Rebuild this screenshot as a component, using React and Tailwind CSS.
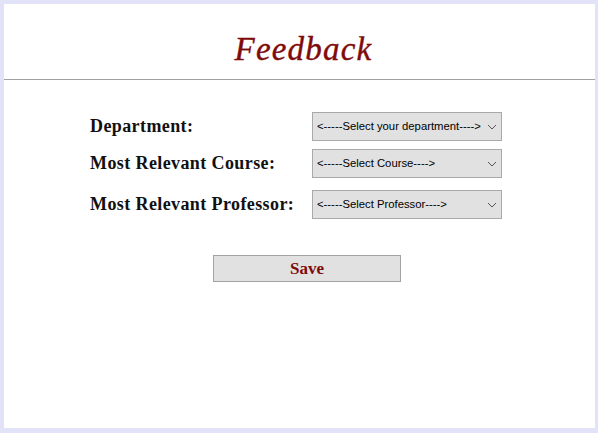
import { useState } from 'react';

function Chevron() {
  return (
    <svg width="10" height="6" viewBox="0 0 10 6" className="shrink-0">
      <path d="M1 1l4 4 4-4" fill="none" stroke="#555" strokeWidth="1" />
    </svg>
  );
}

// Field row: serif label on the left, grey select box on the right
function Field({ label, placeholder, value, onChange, options, className }) {
  return (
    <div className={`flex items-center ${className}`}>
      <label className="w-[222px] text-[18px] font-bold text-[#111] tracking-[0.4px] font-['Liberation_Serif',serif]">{label}</label>
      <div className="relative w-[190px]">
        <select
          value={value}
          onChange={onChange}
          className="w-full h-[29px] appearance-none bg-[#e1e1e1] border border-[#a9a9a9] pl-[4px] pr-[20px] text-[11.3px] text-black font-['Liberation_Sans',sans-serif] outline-none"
        >
          <option value="">{placeholder}</option>
          {options.map((o) => (
            <option key={o} value={o}>{o}</option>
          ))}
        </select>
        <div className="absolute right-[5px] top-[12px] pointer-events-none">
          <Chevron />
        </div>
      </div>
    </div>
  );
}

export default function App() {
  const [form, setForm] = useState({ department: '', course: '', professor: '' });

  const handleChange = (name) => (e) => setForm({ ...form, [name]: e.target.value });

  return (
    <div className="h-[433px] w-[598px] bg-[#e2e2f8] pt-[4px] pl-[4px] pr-[3px] pb-[5px]">
      <div className="h-full bg-white flex flex-col">
        <div className="h-[76px] border-b border-[#a0a0a0] flex items-center justify-center">
          <h1 className="mt-[16px] ml-[8px] text-[33px] italic text-[#7f0a0a] tracking-[1.2px] font-['Liberation_Serif',serif] [-webkit-text-stroke:0.4px_#7f0a0a]">Feedback</h1>
        </div>

        <div className="pl-[86px] pt-[32px]">
          <Field
            label="Department:"
            placeholder="<-----Select your department---->"
            value={form.department}
            onChange={handleChange('department')}
            options={['Computer Science', 'Mathematics', 'Physics']}
          />
          <Field
            label="Most Relevant Course:"
            placeholder="<-----Select Course---->"
            value={form.course}
            onChange={handleChange('course')}
            options={[]}
            className="mt-[8px]"
          />
          <Field
            label="Most Relevant Professor:"
            placeholder="<-----Select Professor---->"
            value={form.professor}
            onChange={handleChange('professor')}
            options={[]}
            className="mt-[12px]"
          />

          <button
            type="button"
            className="ml-[123px] mt-[36px] w-[188px] h-[27px] bg-[#e1e1e1] border border-[#a3a3a3] text-[17px] font-bold text-[#7f0a0a] font-['Liberation_Serif',serif]"
          >
            Save
          </button>
        </div>
      </div>
    </div>
  );
}
